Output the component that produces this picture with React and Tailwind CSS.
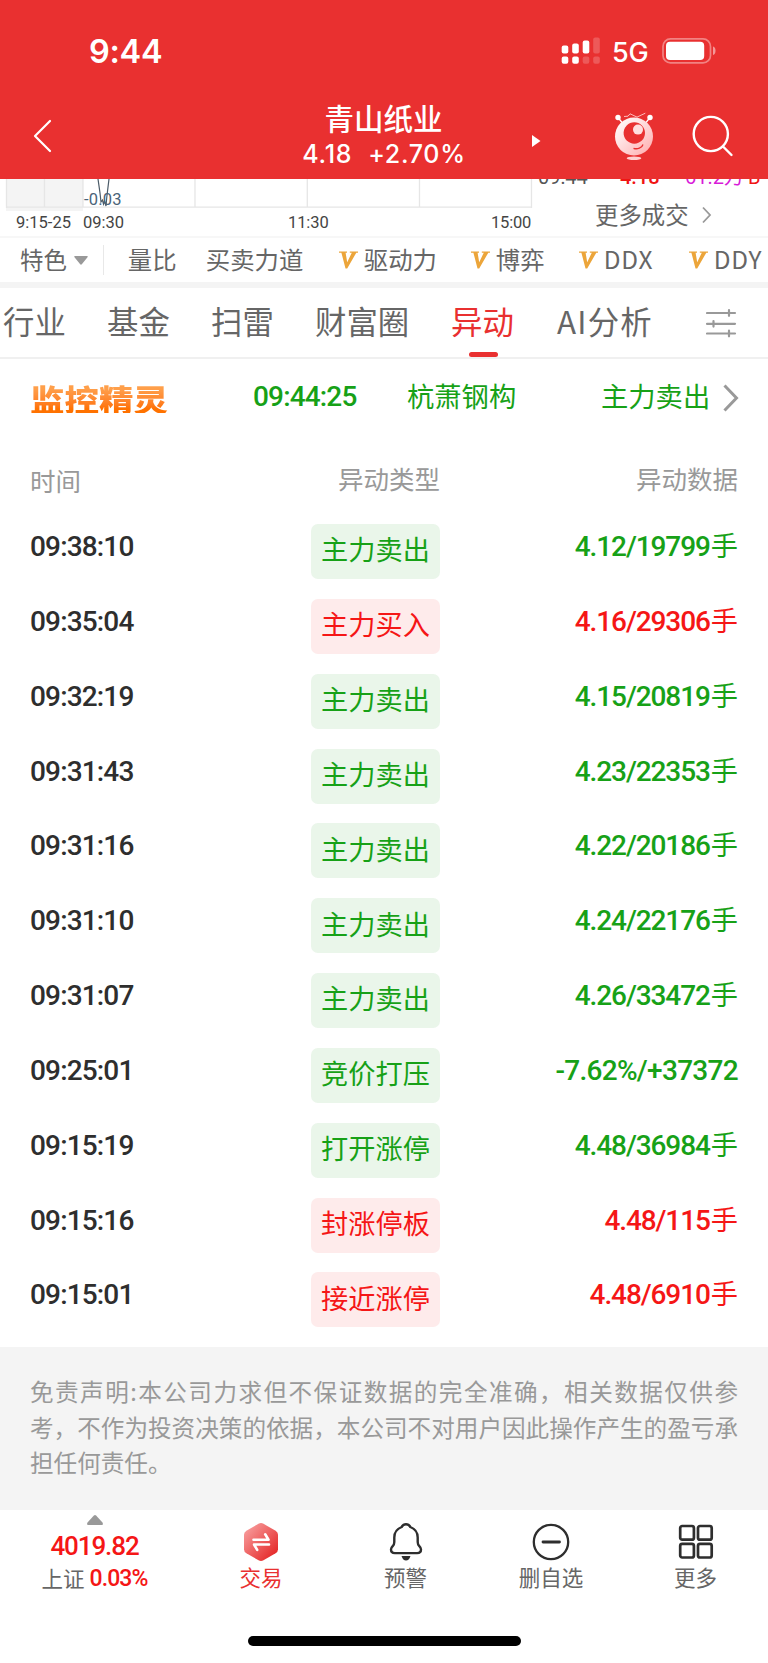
import clsx from 'clsx';

const indicators = [
  { label: '量比', box: 'ml-[24px] w-[78px]' },
  { label: '买卖力道', box: 'w-[133px]' },
  { label: '驱动力', vip: true, box: 'w-[132px]' },
  { label: '博弈', vip: true, box: 'w-[108px]' },
  { label: 'DDX', vip: true, box: 'w-[110px] tracking-[0.8px]' },
  { label: 'DDY', vip: true, box: 'w-[78px] tracking-[0.8px]' },
];

const tabs = [
  { label: '行业', box: 'w-[104px]' },
  { label: '基金', box: 'w-[104px]' },
  { label: '扫雷', box: 'w-[104px]' },
  { label: '财富圈', box: 'w-[136px]' },
  { label: '异动', box: 'w-[106px]', active: true },
  { label: 'AI分析', box: 'w-[149px] tracking-[1.2px]' },
];

const rows = [
  { time: '09:38:10', type: '主力卖出', data: '4.12/19799', unit: '手' },
  { time: '09:35:04', type: '主力买入', data: '4.16/29306', unit: '手', up: true },
  { time: '09:32:19', type: '主力卖出', data: '4.15/20819', unit: '手' },
  { time: '09:31:43', type: '主力卖出', data: '4.23/22353', unit: '手' },
  { time: '09:31:16', type: '主力卖出', data: '4.22/20186', unit: '手' },
  { time: '09:31:10', type: '主力卖出', data: '4.24/22176', unit: '手' },
  { time: '09:31:07', type: '主力卖出', data: '4.26/33472', unit: '手' },
  { time: '09:25:01', type: '竞价打压', data: '-7.62%/+37372' },
  { time: '09:15:19', type: '打开涨停', data: '4.48/36984', unit: '手' },
  { time: '09:15:16', type: '封涨停板', data: '4.48/115', unit: '手', up: true },
  { time: '09:15:01', type: '接近涨停', data: '4.48/6910', unit: '手', up: true },
];

const num = "font-['Roboto','Noto_Sans_CJK_SC',sans-serif]";

function StatusBar() {
  return (
    <div className="flex h-[102px] items-center pl-[89px] font-['Inter',sans-serif] text-white">
      <span className="w-[472px] pt-[2px] text-[32.500px] font-semibold leading-none tracking-[-0.3px]">9:44</span>
      <svg width="40" height="28" viewBox="0 0 40 28" fill="#fff">
        <rect x="0.7" y="8.5" width="6.6" height="8" rx="2" />
        <rect x="11.2" y="6.5" width="6.6" height="10" rx="2" />
        <rect x="21.7" y="3.5" width="6.6" height="13" rx="2" />
        <rect x="32.2" y="0.5" width="6.6" height="16" rx="2" opacity=".2" />
        <rect x="0.7" y="19.5" width="6.6" height="7.3" rx="2" />
        <rect x="11.2" y="19.5" width="6.6" height="7.3" rx="2" />
        <rect x="21.7" y="19.5" width="6.6" height="7.3" rx="2" opacity=".2" />
        <rect x="32.2" y="19.5" width="6.6" height="7.3" rx="2" opacity=".2" />
      </svg>
      <span className="ml-[11px] w-[50px] pt-[2px] text-[27px] font-medium leading-none tracking-[-0.3px]">5G</span>
      <svg width="56" height="28" viewBox="0 0 56 28" fill="none">
        <rect x="1" y="1.9" width="47.5" height="24" rx="7.5" stroke="#fff" strokeOpacity=".4" strokeWidth="1.7" />
        <rect x="4" y="4.8" width="38.2" height="18.2" rx="4" fill="#fff" />
        <path d="M51 9.5c3.4 1 3.4 7.5 0 8.5z" fill="#fff" fillOpacity=".5" />
      </svg>
    </div>
  );
}

function Mascot() {
  return (
    <svg width="40" height="50" viewBox="0 0 40 50" className="shrink-0">
      <defs>
        <linearGradient id="mascot" x1="0" y1="0" x2="1" y2="1">
          <stop offset="0" stopColor="#fff" />
          <stop offset=".35" stopColor="#ffe6e6" />
          <stop offset="1" stopColor="#ffa9ab" />
        </linearGradient>
      </defs>
      <path d="M4 6.500l4 5M36 6.500l-4 5" stroke="#fff" strokeWidth="1.300" />
      <circle cx="4" cy="6.500" r="2.700" fill="#fff" />
      <circle cx="36" cy="6.500" r="2.700" fill="#fff" />
      <path d="M10 5.500l4-.3 2-2.400 7 3.300 8.300-3.900" fill="none" stroke="#ffc9c9" strokeWidth=".9" />
      <circle cx="20" cy="25.500" r="19" fill="url(#mascot)" />
      <circle cx="20.300" cy="22" r="10.700" fill="#e93030" />
      <circle cx="24" cy="18.600" r="5" fill="#ffdede" />
      <path d="M19.500 37.300c4 1.300 8.500-.3 9.500-3.800" fill="none" stroke="#e93030" strokeWidth="1.300" />
      <ellipse cx="20" cy="47.200" rx="7.300" ry="1.700" fill="#ffd0d0" />
    </svg>
  );
}

function TitleBar() {
  return (
    <div className="flex h-[77px] items-start text-white">
      <svg width="20" height="36" viewBox="0 0 20 36" className="ml-[33px] mt-[16px] shrink-0" fill="none" stroke="#fff" strokeWidth="2.2" strokeLinecap="round" strokeLinejoin="round">
        <path d="M17 3L2 18l15 15" />
      </svg>
      <div className="ml-[220px] flex w-[221px] flex-col items-center whitespace-nowrap">
        <span className="-mt-px text-[29.500px] font-medium leading-[32px]">青山纸业</span>
        <span className="mt-[5px] flex gap-[16px] pl-px font-['Inter',sans-serif] text-[25px] font-medium leading-[32px] tracking-[0.7px]">
          <span>4.18</span>
          <span>+2.70%</span>
        </span>
      </div>
      <svg width="9" height="12" viewBox="0 0 9 12" className="ml-[38px] mt-[33px] shrink-0" fill="#fff">
        <path d="M0 0l8.500 6L0 12z" />
      </svg>
      <div className="ml-[73px] mt-[9px]">
        <Mascot />
      </div>
      <svg width="44" height="44" viewBox="0 0 44 44" className="ml-[37px] mt-[12px] shrink-0" fill="none" stroke="#fff" strokeWidth="2.4" strokeLinecap="round">
        <circle cx="19.800" cy="20" r="17.100" />
        <path d="M32 32.500l8.500 8.500" />
      </svg>
    </div>
  );
}

function ChartTail() {
  return (
    <div className="flex h-[57px] overflow-hidden">
      <div className="w-[538px] shrink-0">
        <div className="relative h-[32px]">
          <svg width="538" height="32" viewBox="0 0 538 32" className="block">
            <rect x="6" y="0" width="77" height="32" fill="#f4f4f4" />
            <path d="M6.500 0v29M44.500 0v28M83 0v28M195 0v28M307.300 0v28M419.500 0v28M531.500 0v29M6 28.200h526" stroke="#e6e6e6" strokeWidth="1.300" fill="none" />
            <path d="M98 0l2 14 1 9 1.500-2 1 4 1-3 1.500 5 .8-9L109 0" stroke="#4b5b68" strokeWidth="1.200" fill="none" />
          </svg>
          <span className={clsx(num, 'absolute left-[84px] top-[13px] text-[16.500px] leading-[16px] tracking-[0.2px] text-[#4b6478]')}>-0.03</span>
        </div>
        <div className={clsx(num, 'flex pl-[16px] pt-[4px] text-[16.500px] leading-[16px] text-[#444]')}>
          <span className="w-[67px]">9:15-25</span>
          <span className="w-[205px]">09:30</span>
          <span className="w-[203px] tracking-[-0.1px]">11:30</span>
          <span className="tracking-[-0.2px]">15:00</span>
        </div>
      </div>
      <div className="flex-1">
        <div className={clsx(num, '-mt-[12px] flex h-[20px] text-[20px] leading-[20px]')}>
          <span className="w-[82px] text-[#555]">09:44</span>
          <span className="w-[65px] font-medium text-[#f01414]">4.18</span>
          <span className="w-[63px] text-[#d81bd8]">61.2万</span>
          <span className="text-[#f01414]">B</span>
        </div>
        <div className="mt-[13px] flex items-center pl-[57px] text-[23.400px] leading-[28px] text-[#666]">
          更多成交
          <svg width="10" height="18" viewBox="0 0 10 18" className="ml-[13px] mt-[2px]" fill="none" stroke="#999" strokeWidth="1.800">
            <path d="M1 1.500L8 9l-7 7.500" />
          </svg>
        </div>
      </div>
    </div>
  );
}

function VipMark() {
  return (
    <svg width="19" height="18" viewBox="0 0 19 18" className="mr-[6px] shrink-0" fill="#eca53a">
      <path d="M0 .5h8v1.200H6.600l1.600 9.500 4.600-9.500h-2V.5H19v1.200h-1.700L8.200 17.500H6.500L2.400 1.700H0z" />
    </svg>
  );
}

function IndicatorBar() {
  return (
    <div className="flex h-[46px] items-center overflow-hidden whitespace-nowrap border-t-2 border-[#f7f7f7] text-[24.400px] leading-none text-[#666]">
      <span className="ml-[20px] pb-px text-[23.400px]">特色</span>
      <svg width="14" height="9" viewBox="0 0 14 9" className="ml-[7px] shrink-0" fill="#999">
        <path d="M1 0h12q1.500 0 .5 1.200L7.800 8.300q-.8.900-1.600 0L.5 1.200Q-.5 0 1 0z" />
      </svg>
      <span className="ml-[15px] h-[30px] w-px shrink-0 bg-[#e8e8e8]" />
      {indicators.map(({ label, vip, box }) => (
        <span key={label} className={clsx('flex shrink-0 items-center', box)}>
          {vip && <VipMark />}
          <span className="pb-px">{label}</span>
        </span>
      ))}
    </div>
  );
}

function TabBar() {
  return (
    <div className="flex h-[71px] whitespace-nowrap border-b-2 border-[#f0f0f0] pl-[3px] text-[31.400px] leading-[31px] text-[#666]">
      {tabs.map(({ label, box, active }) => (
        <div key={label} className={clsx('shrink-0 pt-[17px]', box, active && 'text-[#e93030]')}>
          {label}
          {active && <div className="ml-[18px] mt-[16px] h-[5px] w-[29px] rounded-full bg-[#e93030]" />}
        </div>
      ))}
      <svg width="32" height="30" viewBox="0 0 32 30" className="mt-[21px] shrink-0" fill="none" stroke="#999" strokeWidth="2.200" strokeLinecap="round">
        <path d="M1 4h28M1 14.800h28M1 24.500h28M23 1.200v5.600M7.500 12v5.600M23 21.700v5.600" />
      </svg>
    </div>
  );
}

function MonitorBanner() {
  return (
    <div className="flex h-[80px] items-center whitespace-nowrap pl-[30px] text-[27.300px] leading-none text-[#17a117]">
      <span className="w-[223px] pb-[3px]">
        <span className="inline-block origin-center scale-y-[0.86] bg-linear-to-b from-[#ff9f4a] from-20% to-[#ff7200] to-85% bg-clip-text text-[34.500px] font-black leading-[36px] text-transparent">
          监控精灵
        </span>
      </span>
      <span className={clsx(num, 'w-[154px] pb-[4px] text-[28px] font-medium tracking-[-0.85px]')}>09:44:25</span>
      <span className="w-[194px] pb-[6px]">杭萧钢构</span>
      <span className="pb-[6px]">主力卖出</span>
      <svg width="16" height="28" viewBox="0 0 16 28" className="-mt-[2px] ml-[13px]" fill="none" stroke="#999" strokeWidth="3">
        <path d="M1.500 1.500L13.500 14l-12 12.500" />
      </svg>
    </div>
  );
}

function MoveTable() {
  return (
    <div className="h-[908px]">
      <div className="flex h-[85px] px-[30px] pt-[26px] text-[25.500px] leading-[26px] text-[#999]">
        <span className="w-[308px] pt-[2px]">时间</span>
        <span className="flex-1">异动类型</span>
        <span>异动数据</span>
      </div>
      {rows.map(({ time, type, data, unit, up }) => (
        <div key={time} className="flex h-[74.850px] items-start px-[30px] text-[27.200px]">
          <span className={clsx(num, 'w-[281px] pt-[9px] text-[28px] font-medium leading-[28px] tracking-[-0.85px] text-[#2e2e2e]')}>
            {time}
          </span>
          <span
            className={clsx(
              'flex h-[55px] w-[129px] items-center justify-center rounded-[7px] pb-[5px] leading-none',
              up ? 'bg-[#feebeb] text-[#f51616]' : 'bg-[#eaf6ea] text-[#17a117]'
            )}
          >
            {type}
          </span>
          <span
            className={clsx(
              'flex flex-1 items-start justify-end leading-[28px]',
              up ? 'text-[#f51616]' : 'text-[#17a117]'
            )}
          >
            <span className={clsx(num, 'pt-[9px] text-[28px] font-medium', unit ? 'tracking-[-1.1px]' : 'tracking-[-0.7px]')}>{data}</span>
            {unit && <span className="ml-px pt-[6px]">{unit}</span>}
          </span>
        </div>
      ))}
    </div>
  );
}

function NavItem({ label, className, active, children }) {
  return (
    <div className={clsx('flex flex-col items-center text-[21.500px] leading-[24px]', active ? 'text-[#e93030]' : 'text-[#666]', className)}>
      <div className="flex h-[55px] items-center pt-[9px]">{children}</div>
      {label}
    </div>
  );
}

function BottomNav() {
  return (
    <div className="flex h-[126px] whitespace-nowrap bg-white">
      <div className="flex w-[189px] flex-col items-center pt-[5px]">
        <svg width="16" height="10" viewBox="0 0 16 10" fill="#999">
          <path d="M6.900.6q1.100-1 2.200 0l6.400 7Q16.500 9.500 15 10H1Q-.5 9.500.5 7.600z" />
        </svg>
        <span className={clsx(num, 'mt-[8px] text-[26px] font-medium leading-[26px] tracking-[-1.1px] text-[#f51616]')}>4019.82</span>
        <span className="mt-[6px] flex items-center gap-[5px] text-[21.500px] leading-[24px] text-[#666]">
          上证
          <span className={clsx(num, 'pt-[2px] text-[23px] font-medium tracking-[-0.9px] text-[#f51616]')}>0.03%</span>
        </span>
      </div>
      <NavItem label="交易" active className="w-[144px]">
        <svg width="36" height="40" viewBox="0 0 36 40">
          <defs>
            <linearGradient id="trade" x1="0" y1="0" x2="1" y2="1">
              <stop offset="0.100" stopColor="#f79a9a" />
              <stop offset="0.850" stopColor="#e62e2e" />
            </linearGradient>
          </defs>
          <path d="M15.500 1.800q2.500-1.400 5 0L32.600 8.700q2.400 1.400 2.400 4v14.600q0 2.600-2.400 4L20.500 38.200q-2.500 1.400-5 0L3.400 31.300Q1 29.900 1 27.300V12.700q0-2.600 2.400-4z" fill="url(#trade)" />
          <path d="M10.500 17.700h15l-3.300-5.400M26 22.500H11l3.200 5.300" fill="none" stroke="#fff" strokeWidth="2.600" strokeLinecap="round" strokeLinejoin="round" />
        </svg>
      </NavItem>
      <NavItem label="预警" className="w-[145px]">
        <svg width="34" height="40" viewBox="0 0 34 40" fill="none" stroke="#2e2e2e" strokeWidth="2.400" strokeLinejoin="round">
          <path d="M17 2.200c-2 0-3.500 1-4.300 2.800C8 6.800 5.300 10.500 5.300 15.500v4.500c0 2-.4 3-1.600 4.200C2.500 25.400 2 26 2 27.500c0 2.300 1.500 3.600 3.800 3.600h22.400c2.300 0 3.800-1.300 3.800-3.600 0-1.500-.5-2.100-1.700-3.300-1.200-1.200-1.600-2.200-1.600-4.200v-4.500c0-5-2.700-8.700-7.400-10.500C20.500 3.200 19 2.200 17 2.200z" />
          <path d="M12.500 34h9q-1.500 4.500-4.500 4.500T12.500 34z" fill="#2e2e2e" stroke="none" />
        </svg>
      </NavItem>
      <NavItem label="删自选" className="w-[146px]">
        <svg width="38" height="38" viewBox="0 0 38 38" fill="none" stroke="#2e2e2e" strokeWidth="2.300" strokeLinecap="round">
          <circle cx="19" cy="19" r="17.200" />
          <path d="M11 19h16.500" strokeWidth="2.800" />
        </svg>
      </NavItem>
      <NavItem label="更多" className="w-[143px]">
        <svg width="36" height="36" viewBox="0 0 36 36" fill="none" stroke="#2e2e2e" strokeWidth="2.700">
          <rect x="2.200" y="2" width="13.700" height="13.700" rx="2" />
          <rect x="20" y="2" width="13.700" height="13.700" rx="2" />
          <rect x="2.200" y="19.800" width="13.700" height="13.700" rx="2" />
          <rect x="20" y="19.800" width="13.700" height="13.700" rx="2" />
        </svg>
      </NavItem>
    </div>
  );
}

export default function App() {
  return (
    <div className="h-[1663px] w-[768px] overflow-hidden bg-white font-['Noto_Sans_CJK_SC',sans-serif] font-normal">
      <header className="h-[179px] bg-[#e93030]">
        <StatusBar />
        <TitleBar />
      </header>
      <ChartTail />
      <IndicatorBar />
      <div className="h-[6px] bg-[#f4f4f4]" />
      <TabBar />
      <MonitorBanner />
      <MoveTable />
      <p className="h-[163px] bg-[#f4f4f4] px-[30px] pt-[27px] text-justify text-[23.600px] leading-[35.500px] text-[#999]">
        免责声明:本公司力求但不保证数据的完全准确，相关数据仅供参考，不作为投资决策的依据，本公司不对用户因此操作产生的盈亏承担任何责任。
      </p>
      <BottomNav />
      <div className="mx-auto h-[10px] w-[273px] rounded-full bg-black" />
    </div>
  );
}
